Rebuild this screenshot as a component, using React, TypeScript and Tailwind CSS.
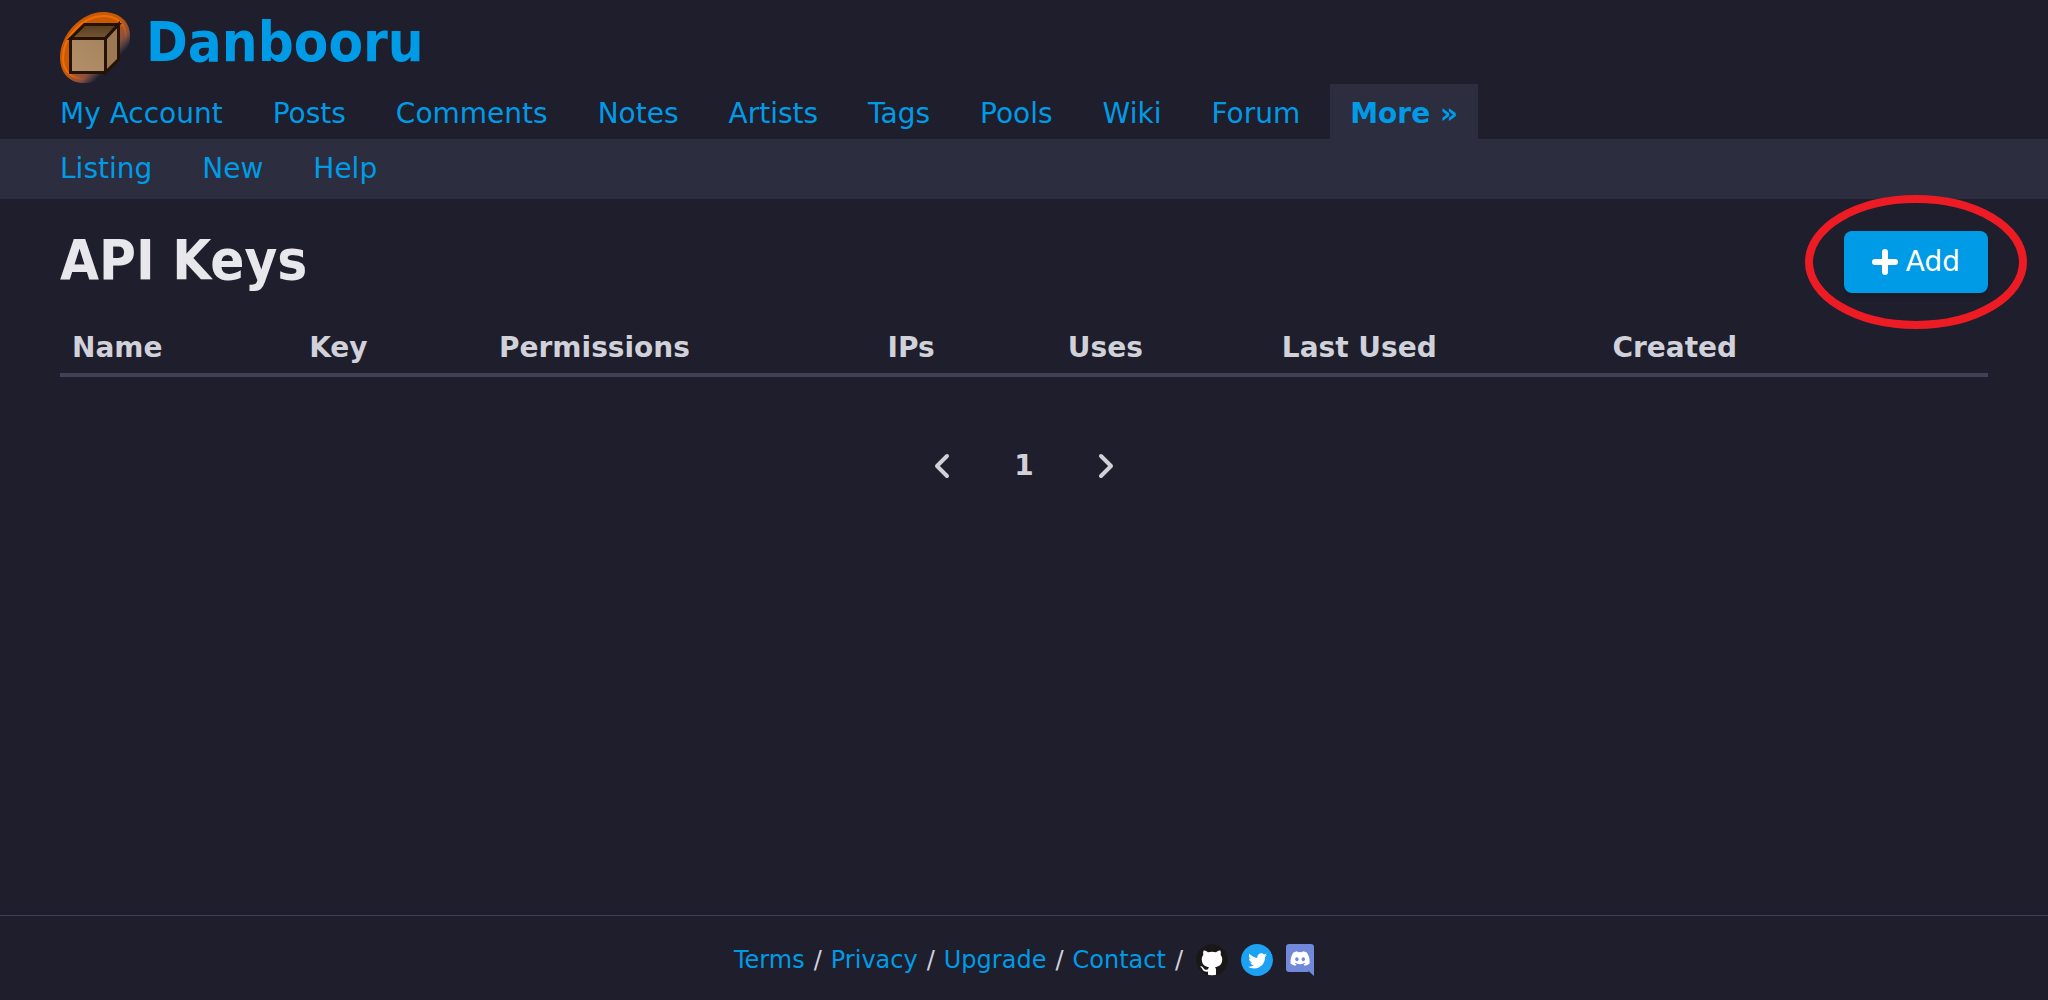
import React from "react";

const mainLinks = ["My Account", "Posts", "Comments", "Notes", "Artists", "Tags", "Pools", "Wiki", "Forum"];
const subLinks = ["Listing", "New", "Help"];
const footerLinks = ["Terms", "Privacy", "Upgrade", "Contact"];
const columns = [
  { label: "Name", width: "w-[12.3%]" },
  { label: "Key", width: "w-[9.85%]" },
  { label: "Permissions", width: "w-[20.15%]" },
  { label: "IPs", width: "w-[9.35%]" },
  { label: "Uses", width: "w-[11.1%]" },
  { label: "Last Used", width: "w-[17.15%]" },
  { label: "Created", width: "w-[14.85%]" },
];

function Logo() {
  return (
    <svg viewBox="0 0 80 80" className="size-[80px]" aria-hidden="true">
      <defs>
        <linearGradient id="ring" x1="0.25" y1="0.25" x2="0.78" y2="0.78">
          <stop offset="0" stopColor="#c85a06" />
          <stop offset="0.4" stopColor="#c85a06" />
          <stop offset="0.72" stopColor="#b06040" stopOpacity="0.75" />
          <stop offset="0.92" stopColor="#a08080" stopOpacity="0" />
        </linearGradient>
        <linearGradient id="ringLine" x1="0.25" y1="0.25" x2="0.78" y2="0.78">
          <stop offset="0.4" stopColor="#f26c05" />
          <stop offset="0.85" stopColor="#f26c05" stopOpacity="0" />
        </linearGradient>
        <linearGradient id="front" x1="0" y1="1" x2="1" y2="0">
          <stop offset="0" stopColor="#b39069" />
          <stop offset="1" stopColor="#a5835f" />
        </linearGradient>
        <linearGradient id="lid" x1="0" y1="0" x2="0" y2="1">
          <stop offset="0" stopColor="#573d20" />
          <stop offset="1" stopColor="#765533" />
        </linearGradient>
      </defs>
      <path d="M7 53C7 31 28 8 50 8C66 8 77 17 77 32C77 55 53 79 31 79C16 79 7 69 7 53Z" fill="url(#ring)" />
      <path d="M10 54C10 33 30 12 50 12C64 12 73 20 73 33C73 54 52 75 32 75C18 75 10 67 10 54Z" fill="none" stroke="url(#ringLine)" strokeWidth="2" />
      <g stroke="#251203" strokeWidth="3" strokeLinejoin="miter">
        <path d="M31.500 20.500H65.500L52.500 34.500H17.500Z" fill="url(#lid)" />
        <path d="M52.500 34.500L65.500 20.500V55.500L52.500 68.500Z" fill="#9b7955" />
        <path d="M17.500 34.500H52.500V68.500H17.500Z" fill="url(#front)" />
      </g>
    </svg>
  );
}

function GithubIcon() {
  return (
    <svg viewBox="0 0 24 24" className="size-8" aria-hidden="true">
      <circle cx="12" cy="12" r="11.500" fill="#fff" />
      <path
        fill="#191717"
        d="M12 0C5.374 0 0 5.373 0 12c0 5.302 3.438 9.800 8.207 11.387.599.111.793-.261.793-.577v-2.234c-3.338.726-4.033-1.416-4.033-1.416-.546-1.387-1.333-1.756-1.333-1.756-1.089-.745.083-.729.083-.729 1.205.084 1.839 1.237 1.839 1.237 1.070 1.834 2.807 1.304 3.492.997.107-.775.418-1.305.762-1.604-2.665-.305-5.467-1.334-5.467-5.931 0-1.311.469-2.381 1.236-3.221-.124-.303-.535-1.524.117-3.176 0 0 1.008-.322 3.301 1.230A11.509 11.509 0 0 1 12 5.803c1.020.005 2.047.138 3.006.404 2.291-1.552 3.297-1.230 3.297-1.230.653 1.653.242 2.874.118 3.176.770.840 1.235 1.911 1.235 3.221 0 4.609-2.807 5.624-5.479 5.921.430.372.823 1.102.823 2.222v3.293c0 .319.192.694.801.576C20.566 21.797 24 17.300 24 12c0-6.627-5.373-12-12-12z"
      />
    </svg>
  );
}

function TwitterIcon() {
  return (
    <svg viewBox="0 0 400 400" className="size-8" aria-hidden="true">
      <circle cx="200" cy="200" r="200" fill="#1da1f2" />
      <path
        fill="#fff"
        d="M163.400 305.500c88.700 0 137.200-73.500 137.200-137.200 0-2.100 0-4.200-.1-6.200 9.400-6.800 17.600-15.300 24.100-25-8.600 3.800-17.900 6.400-27.700 7.600 10-6 17.600-15.400 21.200-26.700-9.300 5.500-19.600 9.500-30.600 11.700-8.800-9.400-21.300-15.200-35.200-15.200-26.600 0-48.200 21.600-48.200 48.200 0 3.800.4 7.500 1.300 11-40.100-2-75.600-21.200-99.400-50.400-4.100 7.100-6.500 15.400-6.500 24.200 0 16.700 8.500 31.500 21.500 40.100-7.900-.2-15.300-2.400-21.800-6v.6c0 23.400 16.600 42.800 38.700 47.300-4 1.100-8.300 1.700-12.700 1.700-3.100 0-6.100-.3-9.100-.9 6.100 19.200 23.900 33.100 45 33.500-16.500 12.900-37.300 20.600-59.900 20.600-3.900 0-7.700-.2-11.500-.7 21.100 13.800 46.500 21.800 73.700 21.800"
      />
    </svg>
  );
}

function DiscordIcon() {
  return (
    <svg viewBox="0 0 28 32" className="h-8 w-[28px]" aria-hidden="true">
      <path d="M3.300 0H24.700A3.300 3.300 0 0 1 28 3.300V32L22 26.500L22.700 28H3.300A3.300 3.300 0 0 1 0 24.700V3.300A3.300 3.300 0 0 1 3.300 0Z" fill="#7289da" />
      <path
        fill="#fff"
        transform="translate(4.500 4.900) scale(0.8)"
        d="M20.317 4.370a19.791 19.791 0 0 0-4.885-1.515.074.074 0 0 0-.079.037c-.210.375-.444.864-.608 1.250a18.270 18.270 0 0 0-5.487 0 12.640 12.640 0 0 0-.617-1.250.077.077 0 0 0-.079-.037A19.736 19.736 0 0 0 3.677 4.370a.070.070 0 0 0-.032.027C.533 9.046-.320 13.580.099 18.057a.082.082 0 0 0 .031.057 19.900 19.900 0 0 0 5.993 3.030.078.078 0 0 0 .084-.028 14.090 14.090 0 0 0 1.226-1.994.076.076 0 0 0-.041-.106 13.107 13.107 0 0 1-1.872-.892.077.077 0 0 1-.008-.128 10.200 10.200 0 0 0 .372-.292.074.074 0 0 1 .077-.010c3.928 1.793 8.180 1.793 12.062 0a.074.074 0 0 1 .078.010c.120.098.246.198.373.292a.077.077 0 0 1-.006.127 12.299 12.299 0 0 1-1.873.892.077.077 0 0 0-.041.107c.360.698.772 1.362 1.225 1.993a.076.076 0 0 0 .084.028 19.839 19.839 0 0 0 6.002-3.030.077.077 0 0 0 .032-.054c.500-5.177-.838-9.674-3.549-13.660a.061.061 0 0 0-.031-.030zM8.020 15.330c-1.183 0-2.157-1.085-2.157-2.419 0-1.333.956-2.419 2.157-2.419 1.210 0 2.176 1.096 2.157 2.420 0 1.333-.956 2.418-2.157 2.418zm7.975 0c-1.183 0-2.157-1.085-2.157-2.419 0-1.333.955-2.419 2.157-2.419 1.210 0 2.176 1.096 2.157 2.420 0 1.333-.946 2.418-2.157 2.418z"
      />
    </svg>
  );
}

function Chevron({ d }: { d: string }) {
  return (
    <svg viewBox="0 0 16 26" className="h-[26px] w-4" aria-hidden="true">
      <path d={d} fill="none" stroke="currentColor" strokeWidth="4" strokeLinecap="round" strokeLinejoin="round" />
    </svg>
  );
}

export default function App() {
  return (
    <div className="flex min-h-screen flex-col bg-[#1e1e2c] font-['Verdana','DejaVu_Sans',sans-serif] text-[28px] leading-[34px] text-[#d1d1da]">
      <header>
        <div className="flex h-[84px] items-center px-[53px] pt-1">
          <a href="#home" className="flex items-center gap-[13px] font-['Tahoma','DejaVu_Sans_Condensed','Noto_Sans',sans-serif] text-[56px] leading-[64px] font-bold text-[#009be6]">
            <Logo />
            <span className="pb-1">Danbooru</span>
          </a>
        </div>
        <nav aria-label="Main" className="flex gap-[10px] px-10 text-[#009be6]">
          {mainLinks.map((label) => (
            <a key={label} href="#main" className="px-5 pt-[13px] pb-2">{label}</a>
          ))}
          <a href="#more" className="bg-[#2c2d3f] px-5 pt-[13px] pb-2 font-bold">More »</a>
        </nav>
        <nav aria-label="API keys" className="flex gap-[10px] bg-[#2c2d3f] px-10 text-[#009be6]">
          {subLinks.map((label) => (
            <a key={label} href="#sub" className="py-[13px] px-5">{label}</a>
          ))}
        </nav>
      </header>

      <main className="flex-1 px-[60px] pt-8">
        <div className="flex items-center justify-between">
          <h1 className="pb-1 font-['Tahoma','DejaVu_Sans_Condensed','Noto_Sans',sans-serif] text-[56px] leading-[58px] font-bold text-[#e8e8ec]">API Keys</h1>
          <div className="relative">
            <button type="button" className="flex h-[62px] items-center gap-2 rounded-lg bg-[#009be6] px-7 text-white shadow-md">
              <svg viewBox="0 0 26 26" className="size-[26px]" aria-hidden="true">
                <path d="M13 3V23M3 13H23" stroke="currentColor" strokeWidth="6" strokeLinecap="round" />
              </svg>
              Add
            </button>
            <svg viewBox="0 0 222 134" className="pointer-events-none absolute top-1/2 left-1/2 h-[134px] w-[222px] max-w-none -translate-1/2" aria-hidden="true">
              <ellipse cx="111" cy="67" rx="107" ry="63" fill="none" stroke="#ed1c24" strokeWidth="8" />
            </svg>
          </div>
        </div>

        <table className="mt-[38px] w-full table-fixed border-collapse text-left">
          <thead>
            <tr className="border-b-4 border-[#414058]">
              {columns.map((column) => (
                <th key={column.label} scope="col" className={`${column.width} px-3 pb-2 font-bold`}>{column.label}</th>
              ))}
              <td />
            </tr>
          </thead>
          <tbody />
        </table>

        <nav aria-label="Pages" className="mt-[72px] flex items-center justify-center gap-16">
          <a href="#previous" aria-label="Previous page"><Chevron d="M13 3L3 13L13 23" /></a>
          <span className="font-bold">1</span>
          <a href="#next" aria-label="Next page"><Chevron d="M3 3L13 13L3 23" /></a>
        </nav>
      </main>

      <footer className="flex h-[85px] items-center justify-center gap-[9px] border-t border-[#414058] pt-1 text-[24px]">
        {footerLinks.map((label) => (
          <React.Fragment key={label}>
            <a href="#footer" className="text-[#009be6]">{label}</a>
            <span>/</span>
          </React.Fragment>
        ))}
        <div className="ml-1 flex gap-[13px]">
          <a href="#github" aria-label="GitHub"><GithubIcon /></a>
          <a href="#twitter" aria-label="Twitter"><TwitterIcon /></a>
          <a href="#discord" aria-label="Discord"><DiscordIcon /></a>
        </div>
      </footer>
    </div>
  );
}
